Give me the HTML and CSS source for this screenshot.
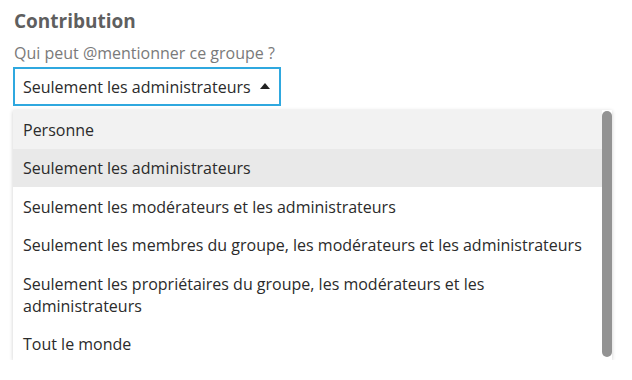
FILE: index.html
```html
<!doctype html>
<html lang="fr">

<head>
  <meta charset="UTF-8" />
  <meta name="viewport" content="width=device-width, initial-scale=1.0" />
  <title>Contribution</title>
  <link rel="stylesheet" href="styles.css">
</head>

<body>
  <div class="setting">
    <h2 class="setting-title">Contribution</h2>
    <label class="setting-label">Qui peut @mentionner ce groupe ?</label>

    <div class="select">
      <div class="select-value">
        <span>Seulement les administrateurs</span>
        <svg class="select-caret" width="10" height="6" viewBox="0 0 10 6">
          <path d="M0 6 L5 0 L10 6 Z" fill="#222" />
        </svg>
      </div>

      <div class="select-menu">
        <ul class="select-options">
          <li class="option is-highlighted">Personne</li>
          <li class="option is-selected">Seulement les administrateurs</li>
          <li class="option">Seulement les modérateurs et les administrateurs</li>
          <li class="option">Seulement les membres du groupe, les modérateurs et les administrateurs</li>
          <li class="option">Seulement les propriétaires du groupe, les modérateurs et les administrateurs</li>
          <li class="option">Tout le monde</li>
        </ul>
        <div class="scrollbar"></div>
      </div>
    </div>
  </div>
</body>

</html>
```

FILE: styles.css
```css
body,
html {
  background-color: #ffffff;
  color: #333333;
  margin: 0;
  padding: 0;
}

body {
  font-family: 'Open Sans', 'Noto Sans', Arial, sans-serif;
}

.setting {
  padding: 8px 13px 0 13px;
}

.setting-title {
  margin: 0 0 0 1px;
  font-size: 19px;
  font-weight: 700;
  line-height: 26px;
  color: #5f5f5f;
}

.setting-label {
  display: block;
  margin: 9px 0 0 1px;
  font-size: 16px;
  line-height: 20px;
  color: #7a7a7a;
}

.select {
  margin-top: 4px;
}

.select-value {
  display: inline-flex;
  align-items: center;
  gap: 9px;
  height: 35px;
  padding: 0 9px 0 8px;
  border: 2px solid #2fa8df;
  font-size: 16px;
  color: #2b2b2b;
}

.select-caret {
  margin-top: -2px;
}

/* Open dropdown list */
.select-menu {
  display: flex;
  width: 599px;
  margin-top: 4px;
  background-color: #ffffff;
  box-shadow: 0 1px 4px rgba(0, 0, 0, 0.2);
}

.select-options {
  flex: 1;
  max-height: 250px;
  overflow: hidden;
  margin: 0;
  padding: 0;
  list-style: none;
}

.option {
  padding: 8.5px 8px 8px 10px;
  font-size: 16px;
  line-height: 22px;
  color: #2b2b2b;
}

.option.is-highlighted {
  background-color: #f2f2f2;
}

.option.is-selected {
  background-color: #e9e9e9;
}

.scrollbar {
  width: 10px;
  margin: 1px 0 3px 0;
  border-radius: 5px;
  background-color: #939393;
}
```
